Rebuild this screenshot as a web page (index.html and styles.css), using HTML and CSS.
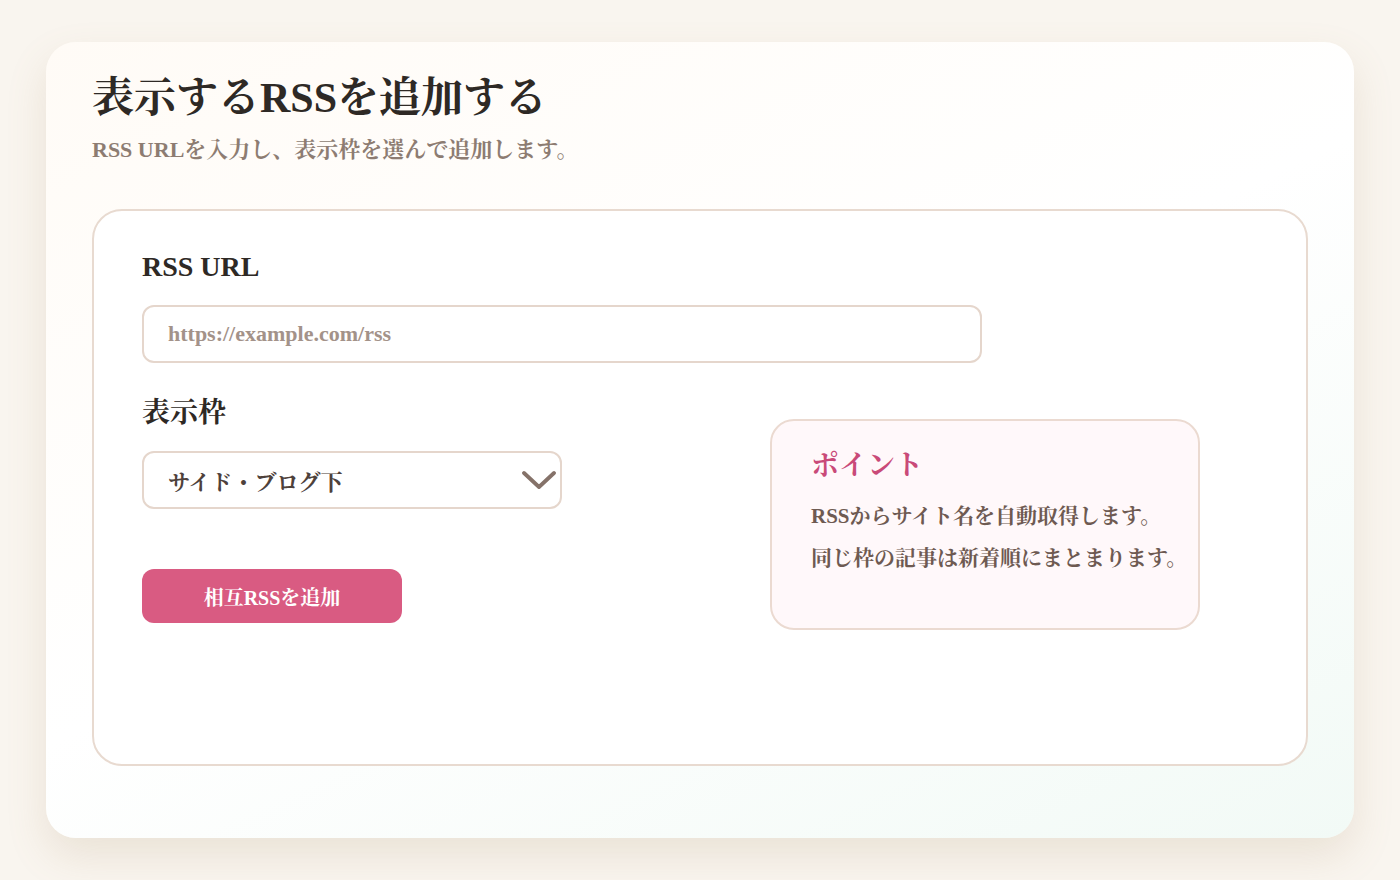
FILE: index.html
```html
<!DOCTYPE html>
<html lang="ja">
<head>
<meta charset="utf-8">
<title>表示するRSSを追加する</title>
<link rel="stylesheet" href="styles.css">
</head>
<body>
<main class="card">
  <h1 class="title">表示するRSSを追加する</h1>
  <p class="subtitle">RSS URLを入力し、表示枠を選んで追加します。</p>
  <section class="form-card">
    <label class="label" for="rss">RSS URL</label>
    <input class="input" id="rss" type="text" placeholder="https://example.com/rss">
    <div class="row">
      <div class="left">
        <label class="label label-frame" for="frame">表示枠</label>
        <div class="select">
          <span class="select-text">サイド・ブログ下</span>
          <svg class="chevron" width="34" height="20" viewBox="0 0 34 20"><path d="M2 3 L17 17 L32 3" fill="none" stroke="#857269" stroke-width="3.8" stroke-linecap="round" stroke-linejoin="round"/></svg>
        </div>
        <button class="btn" type="button">相互RSSを追加</button>
      </div>
      <aside class="point">
        <h2 class="point-title">ポイント</h2>
        <p class="point-line">RSSからサイト名を自動取得します。</p>
        <p class="point-line">同じ枠の記事は新着順にまとまります。</p>
      </aside>
    </div>
  </section>
</main>
</body>
</html>
```
FILE: styles.css
```css
html, body {
  margin: 0;
  padding: 0;
}
body {
  background: #f9f5ef;
  font-family: "Liberation Serif", "Noto Serif CJK JP", serif;
  color: #2e2925;
  padding: 42px 46px;
}
.card {
  box-sizing: border-box;
  height: 796px;
  border-radius: 30px;
  background: linear-gradient(155deg, #fffbf6 0%, #ffffff 50%, #f2faf6 100%);
  box-shadow: 0 18px 40px rgba(160, 130, 90, 0.16);
  padding: 26px 46px 0;
}
.title {
  margin: 0;
  font-size: 42px;
  line-height: 60px;
  font-weight: 700;
  color: #2e2925;
}
.subtitle {
  margin: 7px 0 0;
  font-size: 22px;
  line-height: 30px;
  font-weight: 700;
  color: #8d7c72;
}
.form-card {
  box-sizing: border-box;
  margin-top: 44px;
  height: 557px;
  border: 2px solid #e8dad0;
  border-radius: 30px;
  background: #ffffff;
  padding: 38px 48px;
  display: flex;
  flex-direction: column;
  align-items: flex-start;
}
.label {
  display: block;
  font-size: 28px;
  line-height: 36px;
  font-weight: 700;
  color: #2e2925;
}
.input {
  box-sizing: border-box;
  margin-top: 20px;
  width: 840px;
  height: 58px;
  border: 2px solid #e5d6cc;
  border-radius: 12px;
  padding: 0 24px;
  font-family: inherit;
  font-size: 22px;
  font-weight: 700;
  color: #5a4a44;
  background: #fff;
  outline: none;
}
.input::placeholder {
  color: #a39289;
}
.row {
  display: flex;
  align-items: flex-start;
  margin-top: 32px;
}
.left {
  width: 628px;
  display: flex;
  flex-direction: column;
  align-items: flex-start;
}
.select {
  box-sizing: border-box;
  margin-top: 20px;
  width: 420px;
  height: 58px;
  border: 2px solid #e5d6cc;
  border-radius: 12px;
  padding: 0 4px 0 24px;
  display: flex;
  align-items: center;
  justify-content: space-between;
  background: #fff;
}
.select-text {
  font-size: 22px;
  font-weight: 700;
  color: #4e413b;
}
.chevron {
  display: block;
}
.btn {
  margin-top: 60px;
  width: 260px;
  height: 54px;
  border: none;
  border-radius: 12px;
  background: #d95b82;
  color: #fff;
  font-family: inherit;
  font-size: 20px;
  font-weight: 700;
}
.point {
  box-sizing: border-box;
  margin-top: 24px;
  width: 430px;
  height: 211px;
  border: 2px solid #ebdad1;
  border-radius: 24px;
  background: #fff8fa;
  padding: 26px 10px 26px 39px;
}
.point-title {
  margin: 0;
  font-size: 28px;
  line-height: 38px;
  font-weight: 700;
  color: #c94a78;
}
.point-line {
  margin: 14px 0 0;
  font-size: 21px;
  line-height: 34px;
  font-weight: 700;
  color: #6e5a52;
  white-space: nowrap;
}
.point-line + .point-line {
  margin-top: 8px;
}
```
